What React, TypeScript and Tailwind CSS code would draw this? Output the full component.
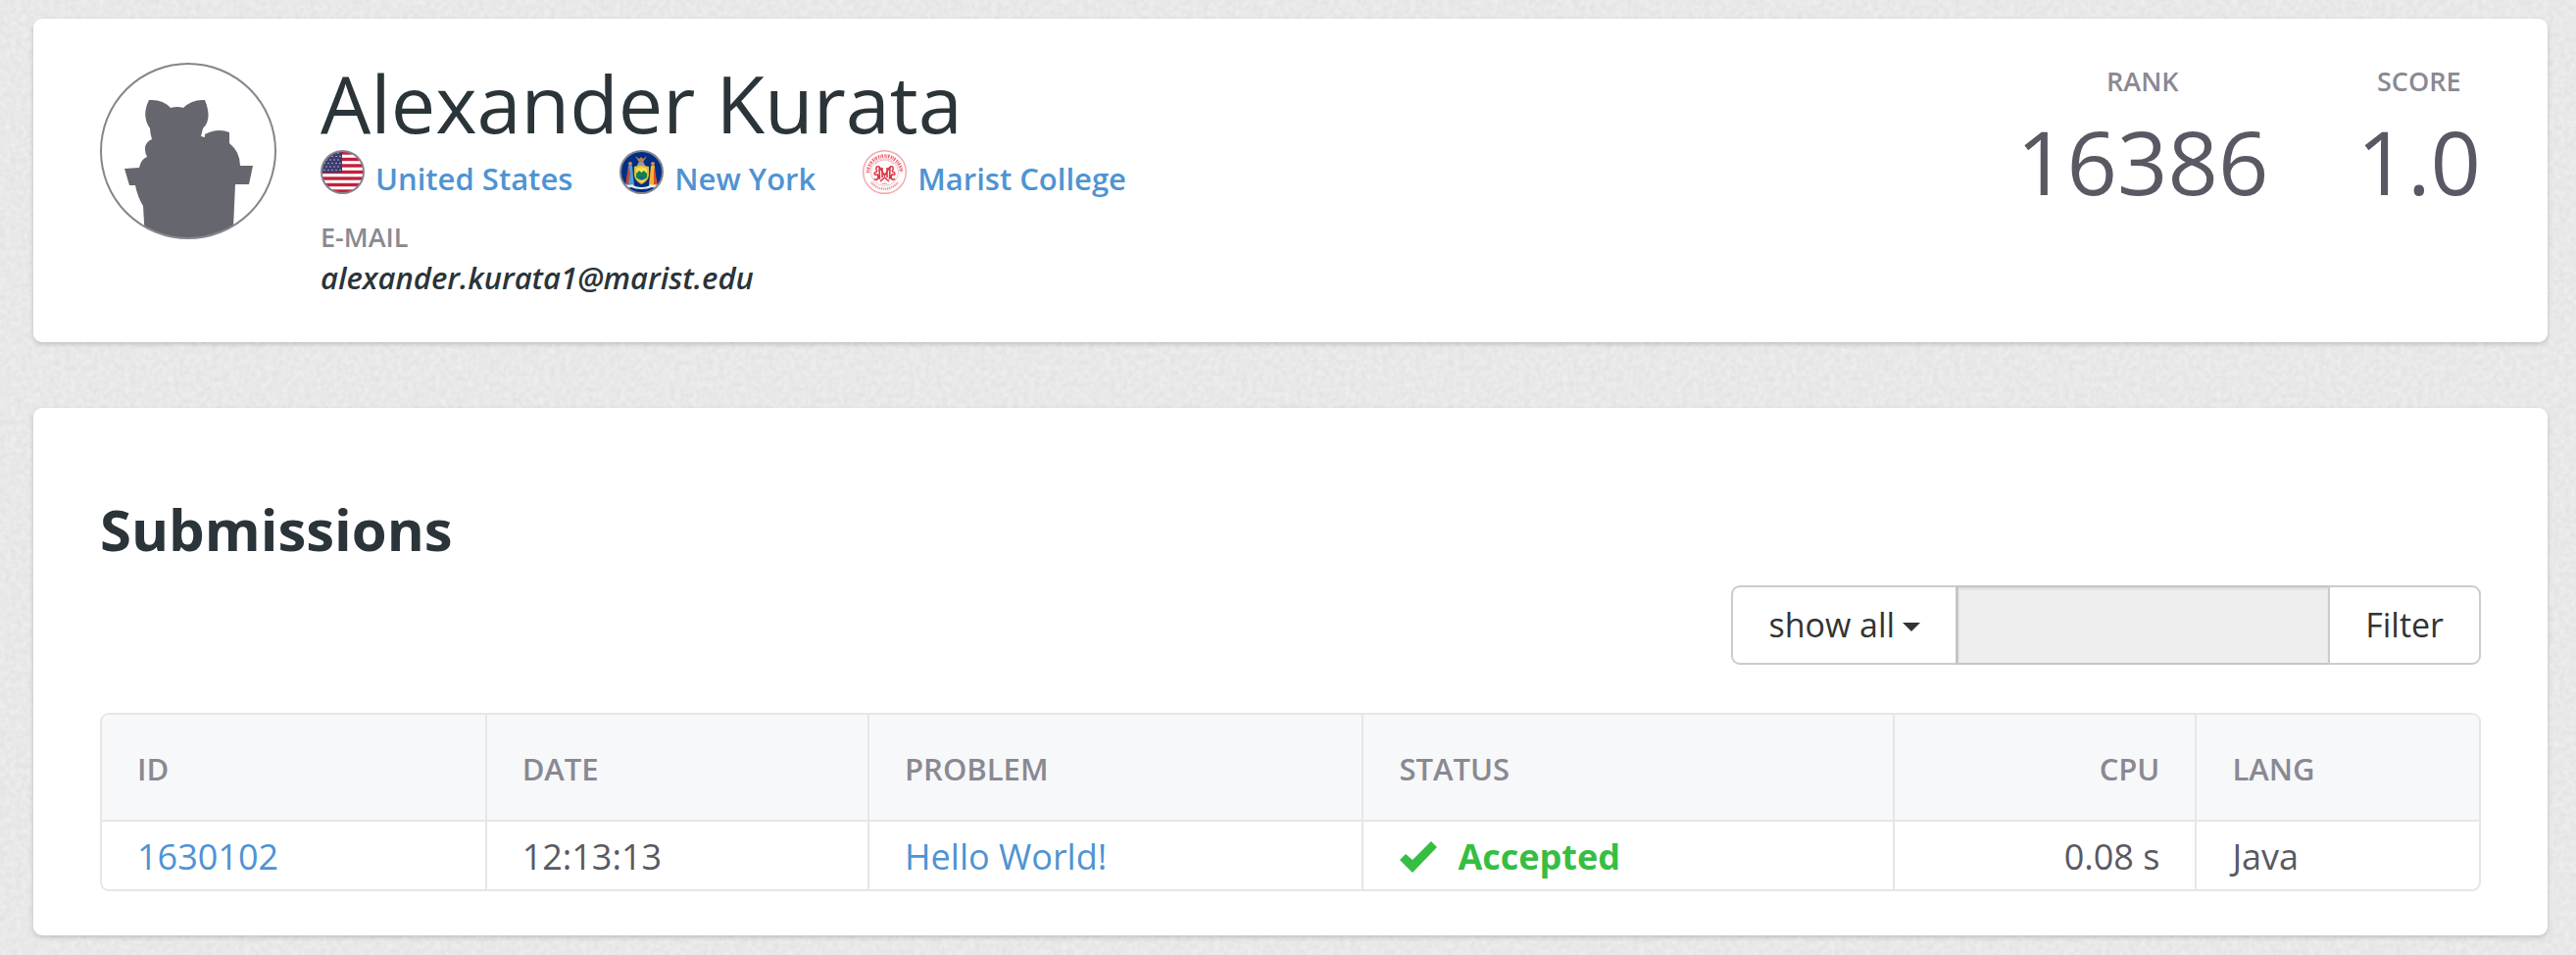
import React from "react";

const regions = [
  { name: "United States", Logo: UsFlag },
  { name: "New York", Logo: NewYorkFlag },
  { name: "Marist College", Logo: MaristSeal },
];

const stats = [
  { label: "Rank", value: "16386" },
  { label: "Score", value: "1.0" },
];

const submissions = [
  { id: "1630102", date: "12:13:13", problem: "Hello World!", status: "Accepted", cpu: "0.08 s", lang: "Java" },
];

function PaperTexture() {
  return (
    <svg className="absolute inset-0 -z-10 size-full" aria-hidden="true">
      <filter id="paper" x="0" y="0" width="100%" height="100%" colorInterpolationFilters="sRGB">
        <feTurbulence type="fractalNoise" baseFrequency="0.18" numOctaves="3" seed="4" stitchTiles="stitch" />
        <feColorMatrix
          type="matrix"
          values="0.07 0 0 0 0.876  0.07 0 0 0 0.876  0.07 0 0 0 0.876  0 0 0 0 1"
        />
      </filter>
      <rect width="100%" height="100%" filter="url(#paper)" />
    </svg>
  );
}

function Avatar() {
  return (
    <svg viewBox="0 0 180 180" className="size-[180px] shrink-0" role="img" aria-label="Profile picture">
      <clipPath id="avatar-clip">
        <circle cx="90" cy="90" r="89" />
      </clipPath>
      <path
        clipPath="url(#avatar-clip)"
        fill="#66666f"
        d="M50 38Q64 37 72 46Q79 44 85 46Q94 37 107 38Q115 58 105 67Q104 71 103 75L107 76V73Q120 66 132 71V82Q143 91 143 105H156L152 124H138L136 168V180H46L44 146Q38 136 36 125H30L25 108L40 107Q42 98 48 96Q42 83 53 78Q51 72 51 67Q42 54 50 38Z"
      />
      <circle cx="90" cy="90" r="89" fill="none" stroke="#85858e" strokeWidth="2" />
    </svg>
  );
}

function UsFlag() {
  return (
    <svg viewBox="0 0 45 45" className="size-[45px]" aria-hidden="true">
      <clipPath id="us-clip">
        <circle cx="22.5" cy="22.5" r="21.5" />
      </clipPath>
      <g clipPath="url(#us-clip)">
        <rect width="45" height="45" fill="#fff" />
        {[2, 8.5, 15, 21.5, 28, 34.5, 41].map((y) => (
          <rect key={y} y={y - 0.7} width="45" height="3.4" fill="#c2203c" />
        ))}
        <rect width="22" height="23" fill="#3c3b6e" />
        {[3, 6.5, 10, 13.5, 17, 20.5].map((y, row) =>
          [2, 6, 10, 14, 18].map((x) => (
            <circle key={`${x}-${y}`} cx={x + (row % 2) * 2} cy={y} r="0.8" fill="#b9b9d4" />
          )),
        )}
      </g>
      <circle cx="22.5" cy="22.5" r="21.5" fill="none" stroke="#85858e" strokeWidth="2" />
    </svg>
  );
}

function NewYorkFlag() {
  return (
    <svg viewBox="0 0 45 45" className="size-[45px]" aria-hidden="true">
      <clipPath id="ny-clip">
        <circle cx="22.5" cy="22.5" r="21.5" />
      </clipPath>
      <g clipPath="url(#ny-clip)">
        <rect width="45" height="45" fill="#002d86" />
        <path d="M16 6L20 9L22 7L24 9L28 6L25 11L23 14H21L19 11Z" fill="#c07a4c" />
        <path d="M19 13Q22 11 25 13L26 16H18Z" fill="#8f98a8" />
        <path d="M15 17Q22 14 30 17V26Q29 32 22.5 35Q16 32 15 26Z" fill="#e8b93c" />
        <path d="M17 19Q22 16 28 19V25Q27 31 22.5 33Q18 31 17 25Z" fill="#f2e35a" />
        <path d="M17 24L20 21L22.5 23L25 21L28 24V28Q22.5 33 17 28Z" fill="#16804a" />
        <path d="M19 28Q22.5 26 26 28L22.5 31Z" fill="#1b5f9c" />
        <circle cx="11" cy="14" r="2" fill="#c98d62" />
        <path d="M9 16H13L15 36H8Z" fill="#4e9ed2" />
        <path d="M9 17L6 35H9L11 24Z" fill="#c4463a" />
        <circle cx="34" cy="14" r="2" fill="#c98d62" />
        <path d="M32 16H36L37 36H30Z" fill="#f2b62c" />
        <path d="M35 17L39 35H35Z" fill="#dc4a2e" />
        <path d="M4 34Q9 37 13 35Q16 38 22.5 38Q29 38 32 35Q36 37 41 34L39 37Q36 39 33 38Q29 40 22.5 40Q16 40 12 38Q8 39 6 37Z" fill="#e8ecf4" />
      </g>
      <circle cx="22.5" cy="22.5" r="21.5" fill="none" stroke="#85858e" strokeWidth="2" />
    </svg>
  );
}

function MaristSeal() {
  return (
    <svg viewBox="0 0 45 45" className="size-[45px]" aria-hidden="true">
      <circle cx="22.5" cy="22.5" r="21.8" fill="#fff" stroke="#f2a5ab" strokeWidth="1.4" />
      <circle cx="22.5" cy="22.5" r="14" fill="none" stroke="#f4b3b8" strokeWidth="0.9" />
      <path
        d="M5.5 23A17 17 0 0 1 39.5 23"
        fill="none"
        stroke="#e9626d"
        strokeWidth="3.6"
        strokeDasharray="1.3 .8 .8 .8 1.5 1.4"
      />
      <path d="M9 33A17 17 0 0 0 36 33" fill="none" stroke="#ef929a" strokeWidth="2.4" strokeDasharray="1.2 .8" />
      <path d="M13 14.5A12.5 12.5 0 0 1 32 14.5" fill="none" stroke="#f2a5ab" strokeWidth="1.5" strokeDasharray="1 .6" />
      <path
        d="M17 17L17.5 30M28 17L27.5 30M17 17L22.5 26L28 17M20 18V28M25 18V28M17 17Q13 16 14 20Q16 22 12.5 23Q11 26 15 25Q17 27 15 30Q13 31 12 29M28 17Q32 16 31 20Q29 22 32.5 23Q34 26 30 25Q28 27 30 30Q32 31 33 29M18 32L22.5 28L27 32"
        fill="none"
        stroke="#dc3545"
        strokeWidth="1.6"
      />
      <path d="M20 34.5H25" stroke="#ef929a" strokeWidth="1" />
    </svg>
  );
}

function CheckIcon() {
  return (
    <svg viewBox="0 0 40 32" className="h-8 w-10 shrink-0" fill="#36be42" aria-hidden="true">
      <path d="M1 19L7 13L14 19L33 0L39 6L14 32Z" />
    </svg>
  );
}

const th = "border-[#e6e6e6] px-9 pt-[33px] pb-[29px] text-[31px] leading-[45px] font-semibold uppercase text-[#8a8992] not-last:border-r-2";
const td = "border-t-2 border-[#e6e6e6] px-9 pt-[11px] pb-[9px] text-[36px] leading-[49px] not-last:border-r-2";

export default function App() {
  return (
    <main className="relative isolate min-h-screen bg-[#e9e9e9] pt-[19px] pr-[29px] pb-[19px] pl-[34px] font-['Open_Sans',sans-serif] text-[#5a5963]">
      <PaperTexture />

      <section className="flex gap-[45px] rounded-[9px] bg-white px-[68px] pt-[45px] pb-[43px] shadow-[0_2px_5px_rgba(0,0,0,0.18)]">
        <Avatar />
        <div className="grow">
          <h1 className="pb-2 text-[81px] leading-[81px] text-[#2a3439]">Alexander Kurata</h1>
          <ul className="flex gap-12 text-[31px] leading-[45px] font-semibold">
            {regions.map(({ name, Logo }) => (
              <li key={name} className="flex gap-[11px]">
                <Logo />
                <a href="#" className="pt-[7px] text-[#4f93d2]">{name}</a>
              </li>
            ))}
          </ul>
          <dl className="pt-[18px]">
            <dt className="text-[27px] leading-[38px] font-semibold uppercase text-[#8a8992]">E-mail</dt>
            <dd className="text-[31px] leading-[45px] font-semibold text-[#2a3439] italic">alexander.kurata1@marist.edu</dd>
          </dl>
        </div>
        <dl className="flex gap-[90px] text-center">
          {stats.map(({ label, value }) => (
            <div key={label}>
              <dt className="text-[27px] leading-[38px] font-semibold uppercase text-[#8a8992]">{label}</dt>
              <dd className="text-[90px] leading-[124px]">{value}</dd>
            </div>
          ))}
        </dl>
      </section>

      <section className="mt-[67px] rounded-[9px] bg-white px-[68px] pt-[90px] pb-[45px] shadow-[0_2px_5px_rgba(0,0,0,0.18)]">
        <h2 className="text-[58px] leading-[67px] font-bold text-[#2a3439]">Submissions</h2>

        <form className="mt-6 flex justify-end text-[34px] leading-[49px] text-[#333]" onSubmit={(e) => e.preventDefault()}>
          <button type="button" className="flex items-center gap-2 rounded-l-[9px] border-2 border-r-0 border-[#ccc] px-9 py-[14px]">
            show all
            <svg viewBox="0 0 18 9" className="mt-1 h-[9px] w-[18px]" fill="currentColor" aria-hidden="true">
              <path d="M0 0H18L9 9Z" />
            </svg>
          </button>
          <input
            type="text"
            aria-label="Filter submissions"
            disabled
            className="w-[380px] border-2 border-r-0 border-l-3 border-[#c2c6ca] bg-[#eee] px-6 shadow-[inset_0_2px_2px_rgba(0,0,0,0.075)]"
          />
          <button type="submit" className="rounded-r-[9px] border-2 border-[#ccc] px-9 py-[14px]">Filter</button>
        </form>

        <div className="mt-[49px] overflow-hidden rounded-[9px] border-2 border-[#e6e6e6]">
          <table className="w-full table-fixed text-left">
            <colgroup>
              <col className="w-[16.15%]" />
              <col className="w-[16.1%]" />
              <col className="w-[20.8%]" />
              <col className="w-[22.35%]" />
              <col className="w-[12.7%]" />
              <col />
            </colgroup>
            <thead className="bg-[#f7f8fa]">
              <tr>
                <th className={th}>ID</th>
                <th className={th}>Date</th>
                <th className={th}>Problem</th>
                <th className={th}>Status</th>
                <th className={`${th} text-right`}>CPU</th>
                <th className={th}>Lang</th>
              </tr>
            </thead>
            <tbody>
              {submissions.map((s) => (
                <tr key={s.id}>
                  <td className={td}><a href="#" className="text-[#4f93d2]">{s.id}</a></td>
                  <td className={td}>{s.date}</td>
                  <td className={td}><a href="#" className="text-[#4f93d2]">{s.problem}</a></td>
                  <td className={td}>
                    <span className="flex items-center gap-5 font-bold text-[#36be42]">
                      <CheckIcon />
                      {s.status}
                    </span>
                  </td>
                  <td className={`${td} text-right`}>{s.cpu}</td>
                  <td className={td}>{s.lang}</td>
                </tr>
              ))}
            </tbody>
          </table>
        </div>
      </section>
    </main>
  );
}
